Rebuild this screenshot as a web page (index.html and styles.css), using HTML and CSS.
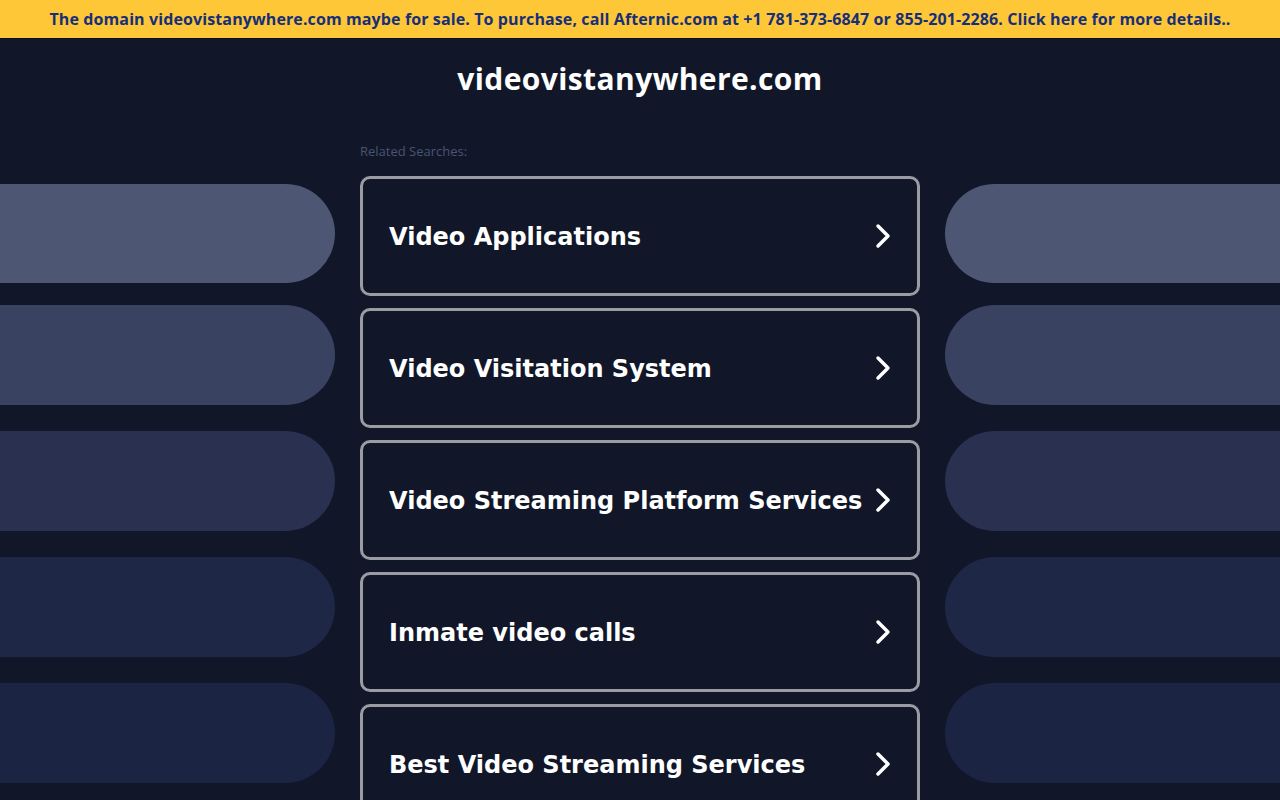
FILE: index.html
```html
<!DOCTYPE html>
<html lang="en">
<head>
    <meta charset="UTF-8">
    <meta name="viewport" content="width=device-width, initial-scale=1.0">
    <title>videovistanywhere.com</title>
    <link rel="stylesheet" href="styles.css">
</head>
<body>

    <!-- For sale banner -->
    <a href="#" class="sale-banner">The domain videovistanywhere.com maybe for sale. To purchase, call Afternic.com at +1 781-373-6847 or 855-201-2286. Click here for more details..</a>

    <h1 class="domain-title">videovistanywhere.com</h1>

    <div class="layout">
        <div class="side side-left">
            <div class="pill pill-1"></div>
            <div class="pill pill-2"></div>
            <div class="pill pill-3"></div>
            <div class="pill pill-4"></div>
            <div class="pill pill-5"></div>
        </div>

        <div class="searches">
            <p class="searches-label">Related Searches:</p>

            <a href="#" class="search-link">
                <span>Video Applications</span>
                <svg class="chevron" viewBox="0 0 16 26"><path d="M3 3 L13 13 L3 23"/></svg>
            </a>
            <a href="#" class="search-link">
                <span>Video Visitation System</span>
                <svg class="chevron" viewBox="0 0 16 26"><path d="M3 3 L13 13 L3 23"/></svg>
            </a>
            <a href="#" class="search-link">
                <span>Video Streaming Platform Services</span>
                <svg class="chevron" viewBox="0 0 16 26"><path d="M3 3 L13 13 L3 23"/></svg>
            </a>
            <a href="#" class="search-link">
                <span>Inmate video calls</span>
                <svg class="chevron" viewBox="0 0 16 26"><path d="M3 3 L13 13 L3 23"/></svg>
            </a>
            <a href="#" class="search-link">
                <span>Best Video Streaming Services</span>
                <svg class="chevron" viewBox="0 0 16 26"><path d="M3 3 L13 13 L3 23"/></svg>
            </a>
        </div>

        <div class="side side-right">
            <div class="pill pill-1"></div>
            <div class="pill pill-2"></div>
            <div class="pill pill-3"></div>
            <div class="pill pill-4"></div>
            <div class="pill pill-5"></div>
        </div>
    </div>

</body>
</html>
```

FILE: styles.css
```css
body {
    margin: 0;
    background-color: #111729;
    font-family: 'DejaVu Sans', sans-serif;
    overflow: hidden;
}

.sale-banner {
    display: block;
    height: 38px;
    line-height: 38px;
    background-color: #fdc737;
    border-bottom: 1px solid #0b0f1a;
    color: #172f78;
    font-family: 'Open Sans', sans-serif;
    font-weight: 700;
    font-size: 16px;
    letter-spacing: 0.11px;
    text-align: center;
    text-decoration: none;
    white-space: nowrap;
}

.domain-title {
    margin: 20px 0 0;
    height: 40px;
    line-height: 40px;
    text-align: center;
    color: #fff;
    font-family: 'Open Sans', sans-serif;
    font-weight: 700;
    font-size: 30px;
    letter-spacing: 0.4px;
}

.layout {
    display: grid;
    grid-template-columns: 335px 560px 335px;
    column-gap: 25px;
    margin-top: 42px;
}

.side {
    display: flex;
    flex-direction: column;
    gap: 26px;
    padding-top: 43px;
}

.pill {
    height: 100px;
    flex-shrink: 0;
}

.side .pill-1 {
    height: 99px;
    margin-bottom: -4px;
}

.side-left .pill {
    border-radius: 0 50px 50px 0;
}

.side-right .pill {
    border-radius: 50px 0 0 50px;
}

.pill-1 { background-color: #4d5673; }
.pill-2 { background-color: #3a4261; }
.pill-3 { background-color: #2a3150; }
.pill-4 { background-color: #1f2747; }
.pill-5 { background-color: #1c2444; }

.searches {
    display: flex;
    flex-direction: column;
    gap: 12px;
}

.searches-label {
    margin: 0 0 1px;
    height: 22px;
    line-height: 20px;
    color: #4a5373;
    font-family: 'Open Sans', sans-serif;
    font-size: 13px;
}

.search-link {
    display: flex;
    align-items: center;
    justify-content: space-between;
    flex-shrink: 0;
    box-sizing: border-box;
    height: 120px;
    padding: 1px 26px 0 26px;
    border: 3px solid #9a9ba3;
    border-radius: 10px;
    color: #fff;
    font-weight: 700;
    font-size: 24px;
    text-decoration: none;
    white-space: nowrap;
}

.chevron {
    width: 16px;
    height: 26px;
    flex-shrink: 0;
    margin-top: -1px;
}

.chevron path {
    fill: none;
    stroke: #fff;
    stroke-width: 3.5;
    stroke-linecap: round;
    stroke-linejoin: round;
}
```
